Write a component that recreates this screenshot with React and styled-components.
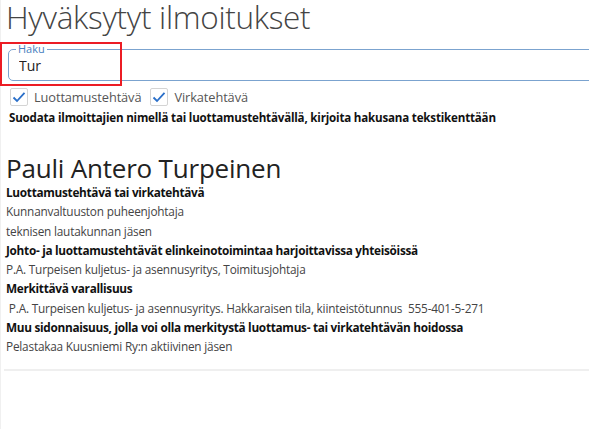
import styled, { createGlobalStyle } from "styled-components";

const Global = createGlobalStyle`
  html, body { margin: 0; padding: 0; background: #ffffff; overflow: hidden; }
  body { font-family: "Open Sans", "Noto Sans", sans-serif; color: #333; }
`;

const Sivu = styled.div`
  position: relative;
  padding: 0 0 0 5px;
  border-left: 1px solid #f0f0f0;
  min-height: 429px;
  box-sizing: border-box;
`;

const Otsikko = styled.h1`
  margin: 0;
  font-size: 31.5px;
  font-weight: 300;
  color: #444;
  line-height: 34px;
  letter-spacing: -0.3px;
  white-space: nowrap;
`;

const Hakukentta = styled.fieldset`
  margin: 9px -30px 0 2px;
  padding: 0 10px 5px;
  border: 1.5px solid #7ba3cf;
  border-radius: 5px;
  min-width: 0;
`;

const Selite = styled.legend`
  padding: 0 2px;
  margin-left: -3px;
  font-size: 11px;
  line-height: 12px;
  color: #4a7fc0;
`;

const Syote = styled.input`
  display: block;
  border: none;
  outline: none;
  padding: 0;
  margin: 0;
  height: 20px;
  width: 100%;
  font-family: inherit;
  font-size: 14px;
  color: #222;
  background: transparent;
`;

const Korostus = styled.div`
  position: absolute;
  left: -1px;
  top: 42px;
  width: 122px;
  height: 44px;
  border: 2px solid #ec1c24;
  box-sizing: border-box;
  pointer-events: none;
`;

const Valinnat = styled.div`
  display: flex;
  gap: 9px;
  margin: 6px 0 0 4px;
`;

const Valinta = styled.label`
  display: flex;
  align-items: center;
  gap: 6px;
  font-size: 12.8px;
  color: #555;
  height: 19px;
  letter-spacing: -0.1px;
`;

const Ruutu = styled.span`
  width: 18px;
  height: 18px;
  border: 1px solid #d4d4d4;
  border-radius: 2px;
  display: flex;
  align-items: center;
  justify-content: center;
  box-sizing: border-box;
`;

const Ohje = styled.p`
  margin: 4px 0 0 3px;
  font-size: 11.6px;
  line-height: 16px;
  font-weight: 700;
  color: #111;
  letter-spacing: -0.2px;
  white-space: nowrap;
`;

const Nimi = styled.h2`
  margin: 27px 0 0 0;
  font-size: 26px;
  font-weight: 400;
  color: #222;
  line-height: 30px;
  letter-spacing: -0.2px;
`;

const Rivi = styled.div`
  font-size: 11.8px;
  line-height: 19.25px;
  font-weight: ${(p) => (p.$lihava ? 700 : 400)};
  color: ${(p) => (p.$lihava ? "#111" : "#444")};
  letter-spacing: ${(p) => (p.$lihava ? "-0.3px" : "-0.2px")};
  white-space: pre;
`;

const Erotin = styled.hr`
  margin: 13px -10px 0 -2px;
  border: none;
  border-top: 2px solid #efefef;
`;

function Valintaruutu({ teksti }) {
  return (
    <Valinta>
      <Ruutu>
        <svg width="14" height="12" viewBox="0 0 14 12">
          <path d="M1.5 6.5 L5 10 L12.5 1.8" fill="none" stroke="#2a6fc9" strokeWidth="1.8" />
        </svg>
      </Ruutu>
      {teksti}
    </Valinta>
  );
}

export default function App() {
  return (
    <Sivu>
      <Global />
      <Otsikko>Hyväksytyt ilmoitukset</Otsikko>
      <Hakukentta>
        <Selite>Haku</Selite>
        <Syote defaultValue="Tur" />
      </Hakukentta>
      <Korostus />
      <Valinnat>
        <Valintaruutu teksti="Luottamustehtävä" />
        <Valintaruutu teksti="Virkatehtävä" />
      </Valinnat>
      <Ohje>Suodata ilmoittajien nimellä tai luottamustehtävällä, kirjoita hakusana tekstikenttään</Ohje>

      <Nimi>Pauli Antero Turpeinen</Nimi>
      <Rivi $lihava>Luottamustehtävä tai virkatehtävä</Rivi>
      <Rivi>Kunnanvaltuuston puheenjohtaja</Rivi>
      <Rivi>teknisen lautakunnan jäsen</Rivi>
      <Rivi $lihava>Johto- ja luottamustehtävät elinkeinotoimintaa harjoittavissa yhteisöissä</Rivi>
      <Rivi>P.A. Turpeisen kuljetus- ja asennusyritys, Toimitusjohtaja</Rivi>
      <Rivi $lihava>Merkittävä varallisuus</Rivi>
      <Rivi> P.A. Turpeisen kuljetus- ja asennusyritys. Hakkaraisen tila, kiinteistötunnus  555-401-5-271</Rivi>
      <Rivi $lihava>Muu sidonnaisuus, jolla voi olla merkitystä luottamus- tai virkatehtävän hoidossa</Rivi>
      <Rivi>Pelastakaa Kuusniemi Ry:n aktiivinen jäsen</Rivi>
      <Erotin />
    </Sivu>
  );
}
